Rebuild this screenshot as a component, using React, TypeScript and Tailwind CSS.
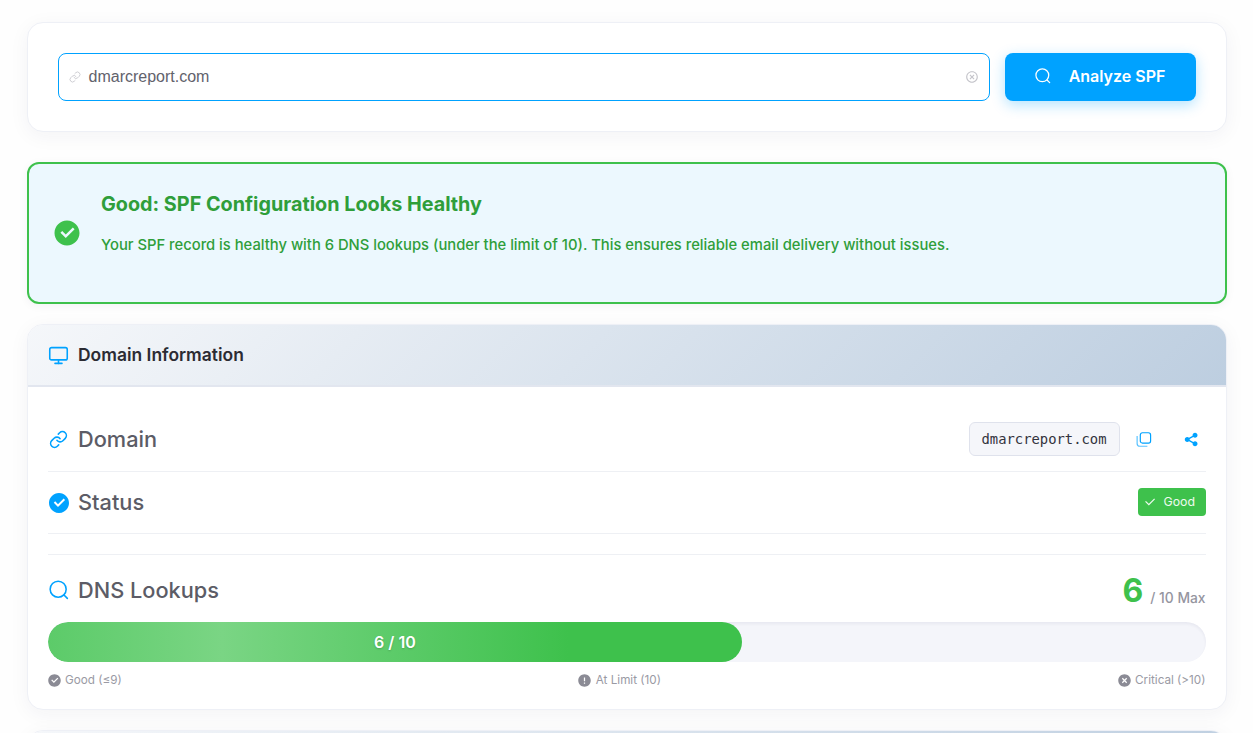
import {
  RiCheckLine,
  RiCheckboxCircleFill,
  RiCloseCircleFill,
  RiCloseCircleLine,
  RiErrorWarningFill,
  RiShareFill,
} from "react-icons/ri";
import { Link, Monitor } from "lucide-react";

const CARD = "rounded-2xl border border-[#eef0f6] bg-white shadow-[0_4px_20px_rgba(30,40,80,0.05)]";
const ROW_LABEL = "text-[21.75px] font-medium text-[#5c5c66]";

const SCALE = [
  { label: "Good (≤9)", icon: RiCheckboxCircleFill },
  { label: "At Limit (10)", icon: RiErrorWarningFill },
  { label: "Critical (>10)", icon: RiCloseCircleFill },
];

function SearchIcon({ className }: { className: string }) {
  return (
    <svg viewBox="0 0 24 24" fill="none" stroke="currentColor" strokeWidth="1.9" className={className}>
      <circle cx="11" cy="11" r="9.6" />
      <path d="M18 18l4 4" strokeLinecap="round" />
    </svg>
  );
}

function CopyIcon({ className }: { className: string }) {
  return (
    <svg viewBox="0 0 24 24" fill="none" stroke="currentColor" strokeWidth="1.7" className={className}>
      <rect x="7.5" y="2.5" width="14.5" height="14.5" rx="3" />
      <path d="M3 7v10.5A4 4 0 0 0 7 21.5h10.5" opacity="0.65" />
    </svg>
  );
}

export default function App() {
  return (
    <div className="flex h-[733px] flex-col gap-[20px] overflow-hidden bg-[#fefefe] px-[26.5px] pt-[22px] font-['Inter',sans-serif]">
      <section className={`${CARD} flex shrink-0 items-center gap-[15px] px-[30px] py-[30px]`}>
        <div className="flex h-[48px] flex-1 items-center rounded-lg border border-[#00a2ff] pl-[10px] pr-[10px]">
          <Link className="h-[12px] w-[12px] text-[#c9c9cf]" strokeWidth={1.8} />
          <span className="ml-[8px] flex-1 font-['Liberation_Sans',sans-serif] text-base text-[#62626c]">
            dmarcreport.com
          </span>
          <RiCloseCircleLine className="h-[14px] w-[14px] text-[#c4c4ca]" />
        </div>
        <button
          type="button"
          className="flex h-[48px] w-[191px] items-center justify-center gap-[18px] rounded-lg bg-[#00a2ff] pb-[2px] text-base font-semibold text-white shadow-[0_4px_14px_rgba(0,162,255,0.3)]"
        >
          <SearchIcon className="h-[16px] w-[16px]" />
          Analyze SPF
        </button>
      </section>

      <section className="mt-[10px] flex h-[142px] shrink-0 items-center rounded-xl border-2 border-[#3ec14c] bg-[#ecf8fe] pl-[23px] pr-[24px] shadow-[0_2px_10px_rgba(30,40,80,0.05)]">
        <RiCheckboxCircleFill className="h-[30px] w-[30px] shrink-0 text-[#3ec14c]" />
        <div className="ml-[19.5px] -mt-[19px] text-[#2f9e3a]">
          <h2 className="text-[19.8px] font-bold leading-[28px]">Good: SPF Configuration Looks Healthy</h2>
          <p className="mt-[15px] text-[14.78px] font-medium leading-[24px]">
            Your SPF record is healthy with 6 DNS lookups (under the limit of 10). This ensures reliable email delivery without issues.
          </p>
        </div>
      </section>

      <section className={`${CARD} shrink-0 overflow-hidden`}>
        <header className="flex h-[62px] items-center gap-[8.5px] border-b-2 border-[#e2e6ef] bg-[linear-gradient(135deg,#f5f7fa_0%,#bdcee0_100%)] px-[20px]">
          <span className="flex w-[22px] justify-center">
            <Monitor className="h-[21px] w-[21px] shrink-0 text-[#00a2ff]" strokeWidth={1.8} />
          </span>
          <h3 className="text-[17.45px] font-semibold text-[#2b2b33]">Domain Information</h3>
        </header>
        <div className="px-[20px] pb-[20px] pt-[20px]">
          <div className="flex h-[65px] items-center justify-between border-b border-[#eef0f4]">
            <div className="flex items-center gap-[8.5px]">
              <span className="flex w-[22px] justify-center">
                <Link className="h-[19px] w-[19px] text-[#00a2ff]" strokeWidth={2} />
              </span>
              <span className={ROW_LABEL}>Domain</span>
            </div>
            <div className="flex items-center">
              <code className="flex h-[34px] w-[151px] items-center justify-center rounded-md border border-[#dfe2ec] bg-[#f5f6fa] font-['DejaVu_Sans_Mono',monospace] text-[13.85px] text-[#33333d]">
                dmarcreport.com
              </code>
              <CopyIcon className="ml-[15px] h-[17px] w-[17px] text-[#00a2ff]" />
              <RiShareFill className="ml-[31px] mr-[6px] h-[17px] w-[17px] text-[#00a2ff]" />
            </div>
          </div>
          <div className="flex h-[62px] items-center justify-between border-b border-[#eef0f4]">
            <div className="flex items-center gap-[8.5px]">
              <span className="flex w-[22px] justify-center">
                <RiCheckboxCircleFill className="h-[24px] w-[24px] shrink-0 text-[#00a2ff]" />
              </span>
              <span className={ROW_LABEL}>Status</span>
            </div>
            <span className="mb-[2px] flex h-[28px] w-[68px] items-center gap-[7px] rounded bg-[#3ec14c] pl-[5px] pt-[1px] text-[12.3px] font-normal text-[#eefbf0]">
              <RiCheckLine className="h-[14px] w-[14px]" />
              Good
            </span>
          </div>
          <div className="mt-[20px] border-t border-[#eef0f4] pt-[19px]">
            <div className="flex items-end justify-between">
              <div className="mb-[2px] flex items-center gap-[8.5px]">
                <span className="flex w-[22px] justify-center">
                  <SearchIcon className="h-[20px] w-[20px] shrink-0 text-[#00a2ff]" />
                </span>
                <span className={ROW_LABEL}>DNS Lookups</span>
              </div>
              <div className="flex items-baseline gap-[7px]">
                <span className="relative -top-[1px] text-[32px] font-bold leading-[34px] text-[#3ec14c]">6</span>
                <span className="text-[13.8px] font-medium text-[#95959f]">/ 10 Max</span>
              </div>
            </div>
            <div className="mt-[13px] h-[40px] overflow-hidden rounded-full bg-[#f4f5fa] shadow-[inset_0_2px_3px_rgba(30,40,80,0.06)]">
              <div className="flex h-full w-[60%] items-center justify-center rounded-full bg-[linear-gradient(90deg,#5ccb69_0%,#7ad584_25%,#5ccb69_50%,#3ec14c_75%,#3ec14c_100%)] text-base font-semibold text-white [text-shadow:0_1px_2px_rgba(0,0,0,0.2)]">
                6 / 10
              </div>
            </div>
            <div className="mt-[10px] flex items-center justify-between text-[11.7px] text-[#9a9aa4]">
              {SCALE.map(({ label, icon: Icon }) => (
                <span key={label} className="flex items-center gap-[3.5px]">
                  <Icon className="-ml-[1px] h-[15px] w-[15px] text-[#8b8b95]" />
                  {label}
                </span>
              ))}
            </div>
          </div>
        </div>
      </section>

      <section className={`${CARD} h-[62px] shrink-0 overflow-hidden`}>
        <div className="h-full bg-[linear-gradient(135deg,#f5f7fa_0%,#bdcee0_100%)]" />
      </section>
    </div>
  );
}
